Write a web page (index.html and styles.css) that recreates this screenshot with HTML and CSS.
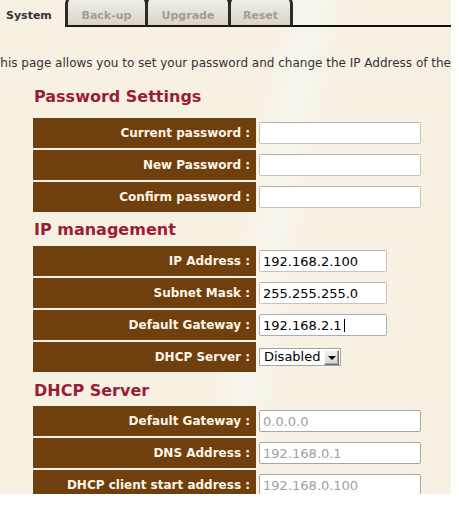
FILE: index.html
```html
<!DOCTYPE html>
<html>
<head>
<meta charset="utf-8">
<link rel="stylesheet" href="styles.css">
</head>
<body>
<div class="page">
  <div class="tabs">
    <div class="tab active">System</div>
    <div class="tab tab-backup">Back-up</div>
    <div class="tab tab-upgrade">Upgrade</div>
    <div class="tab tab-reset">Reset</div>
    <div class="tab-line"></div>
  </div>

  <p class="intro">This page allows you to set your password and change the IP Address of the device.</p>

  <h2 class="heading heading-pw">Password Settings</h2>
  <div class="form">
    <div class="row"><div class="label">Current password :</div><div class="field"><input class="text wide" type="text"></div></div>
    <div class="row"><div class="label">New Password :</div><div class="field"><input class="text wide" type="text"></div></div>
    <div class="row"><div class="label">Confirm password :</div><div class="field"><input class="text wide" type="text"></div></div>
  </div>

  <h2 class="heading heading-ip">IP management</h2>
  <div class="form">
    <div class="row"><div class="label">IP Address :</div><div class="field"><input class="text narrow" type="text" value="192.168.2.100"></div></div>
    <div class="row"><div class="label">Subnet Mask :</div><div class="field"><input class="text narrow" type="text" value="255.255.255.0"></div></div>
    <div class="row"><div class="label">Default Gateway :</div><div class="field"><span class="caret-wrap"><input class="text narrow focused" type="text" value="192.168.2.1"><span class="caret"></span></span></div></div>
    <div class="row"><div class="label">DHCP Server :</div><div class="field">
      <div class="select"><span class="select-value">Disabled</span><span class="select-btn"><span class="arrow"></span></span></div>
    </div></div>
  </div>

  <h2 class="heading heading-dhcp">DHCP Server</h2>
  <div class="form">
    <div class="row"><div class="label">Default Gateway :</div><div class="field"><input class="text wide" type="text" value="0.0.0.0" disabled></div></div>
    <div class="row"><div class="label">DNS Address :</div><div class="field"><input class="text wide" type="text" value="192.168.0.1" disabled></div></div>
    <div class="row"><div class="label">DHCP client start address :</div><div class="field"><input class="text wide" type="text" value="192.168.0.100" disabled></div></div>
  </div>
</div>
</body>
</html>
```

FILE: styles.css
```css
html, body {
  margin: 0;
  padding: 0;
  background: #ffffff;
}

.page {
  width: 451px;
  height: 494px;
  overflow: hidden;
  background-color: #f7f1e4;
  background-image: linear-gradient(100deg, rgba(255,255,255,0) 52%, rgba(255,255,255,0.35) 58%, rgba(255,255,255,0) 64%);
  font-family: "DejaVu Sans", Verdana, sans-serif;
  color: #333333;
}

/* Tabs */
.tabs {
  display: flex;
  height: 31px;
  margin-top: -4px;
}

.tab {
  box-sizing: border-box;
  height: 31px;
  font-size: 11px;
  font-weight: bold;
  line-height: 13px;
  padding-top: 13px;
  white-space: nowrap;
}

.tab.active {
  width: 65px;
  padding-left: 6px;
  color: #333333;
}

.tab-backup, .tab-upgrade, .tab-reset {
  text-align: center;
  color: #a39c94;
  background: linear-gradient(#f4f0e8, #d9d3c8);
  border-left: 3px solid #2e2a27;
  border-right: 3px solid #2e2a27;
  border-top: 2px solid #2e2a27;
  border-bottom: 2px solid #1a1816;
  border-radius: 8px 8px 0 0;
  padding-top: 11px;
}

.tab-backup { width: 83px; }
.tab-upgrade { width: 86px; margin-left: -3px; }
.tab-reset { width: 65px; margin-left: -3px; }

.tab-line {
  flex: 1;
  box-sizing: border-box;
  height: 31px;
  border-bottom: 2px solid #111111;
}

/* Intro */
.intro {
  margin: 29px 0 0 0;
  font-size: 12px;
  line-height: 15px;
  white-space: nowrap;
  text-indent: -7px;
  color: #333333;
}

/* Headings */
.heading {
  margin: 0 0 0 34px;
  font-size: 16px;
  line-height: 20px;
  font-weight: bold;
  color: #9b1d35;
}

.heading-pw { margin-top: 16px; margin-bottom: 11px; }
.heading-ip { margin-top: 8px; margin-bottom: 6px; }
.heading-dhcp { margin-top: 9px; margin-bottom: 5px; }

/* Form rows */
.form {
  display: flex;
  flex-direction: column;
  gap: 2px;
  margin-left: 33px;
}

.row {
  display: flex;
  height: 30px;
  gap: 3px;
}

.label {
  box-sizing: border-box;
  width: 223px;
  background: #703f0e;
  color: #fdf6e6;
  font-size: 12px;
  font-weight: bold;
  display: flex;
  align-items: center;
  justify-content: flex-end;
  padding-right: 6px;
  white-space: nowrap;
}

.field {
  display: flex;
  align-items: center;
}

.text {
  box-sizing: border-box;
  height: 22px;
  margin: 0;
  padding: 0 3px;
  border: 1px solid #c6c3bd;
  border-top-color: #b4b1ab;
  border-radius: 2px;
  background: #ffffff;
  font-family: "DejaVu Sans", Verdana, sans-serif;
  font-size: 13px;
  color: #000000;
  outline: none;
}

.text.wide { width: 162px; }
.text.narrow { width: 128px; }

.text.focused {
  border-color: #9eb0c2;
}

.text:disabled {
  border-color: #a9a7a3;
  color: #a0a0a0;
  background: #ffffff;
}

.caret-wrap {
  position: relative;
  display: inline-flex;
}

.caret {
  position: absolute;
  left: 85px;
  top: 5px;
  width: 1px;
  height: 13px;
  background: #000000;
}

/* Select */
.select {
  box-sizing: border-box;
  width: 82px;
  height: 18px;
  border: 1px solid #a5a5a5;
  background: #ffffff;
  display: flex;
  align-items: center;
  justify-content: space-between;
  padding-left: 4px;
  padding-right: 1px;
}

.select-value {
  font-size: 13px;
  line-height: 16px;
  color: #000000;
}

.select-btn {
  box-sizing: border-box;
  width: 15px;
  height: 15px;
  background: linear-gradient(#f2f1ee, #d6d3cc);
  border: 1px solid;
  border-color: #ffffff #6d6d6d #6d6d6d #ffffff;
  box-shadow: inset -1px -1px 0 #a9a6a0;
  display: flex;
  align-items: center;
  justify-content: center;
}

.arrow {
  width: 0;
  height: 0;
  border-left: 4px solid transparent;
  border-right: 4px solid transparent;
  border-top: 4px solid #000000;
  margin-top: 1px;
}
```
